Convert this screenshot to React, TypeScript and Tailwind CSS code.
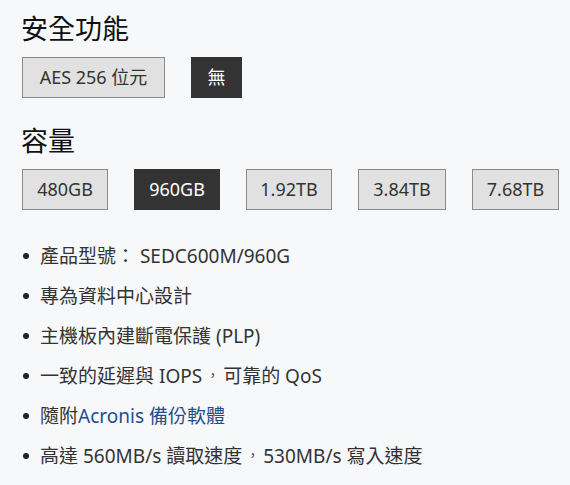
export default function App() {
  const font = { fontFamily: '"Noto Sans", "Noto Sans CJK TC", sans-serif' };
  const btn = "h-[41px] border border-[#8a8a8a] bg-[#e1e1e1] text-[#333] text-[18px] flex items-center justify-center";
  const sel = "h-[41px] border border-[#333] bg-[#333] text-white text-[18px] flex items-center justify-center";
  const C = () => (
    <span className="inline-block w-[21px] pl-[4px] text-[13px] align-[3px]">，</span>
  );
  const items: React.ReactNode[] = [
    "產品型號： SEDC600M/960G",
    "專為資料中心設計",
    "主機板內建斷電保護 (PLP)",
    <span>一致的延遲與 IOPS<C />可靠的 QoS</span>,
    <span>隨附<span className="text-[#1f4e8c]">Acronis 備份軟體</span></span>,
    <span>高達 560MB/s 讀取速度<C />530MB/s 寫入速度</span>,
  ];
  return (
    <div lang="zh-Hant-TW" className="w-[570px] h-[485px] bg-[#f7f8fa] pl-[22px] pt-[10px] text-[#222]" style={font}>
      <div className="text-[27px] leading-[38px] text-[#111] -ml-[1px]">安全功能</div>
      <div className="flex gap-[26px] mt-[9px]">
        <div className={`${btn} w-[143px]`}>AES 256 位元</div>
        <div className={`${sel} w-[51px]`}>無</div>
      </div>
      <div className="text-[27px] leading-[38px] text-[#111] mt-[24px] -ml-[1px]">容量</div>
      <div className="flex gap-[26px] mt-[9px]">
        <div className={`${btn} w-[86px]`}>480GB</div>
        <div className={`${sel} w-[86px]`}>960GB</div>
        <div className={`${btn} w-[86px]`}>1.92TB</div>
        <div className={`${btn} w-[88px]`}>3.84TB</div>
        <div className={`${btn} w-[87px]`}>7.68TB</div>
      </div>
      <ul className="mt-[26px] text-[19px] text-[#333]">
        {items.map((t, i) => (
          <li key={i} className="flex items-center h-[40px]">
            <span className="w-[6px] h-[6px] rounded-full bg-[#222] ml-[1px] mr-[11px]" />
            <span>{t}</span>
          </li>
        ))}
      </ul>
    </div>
  );
}
